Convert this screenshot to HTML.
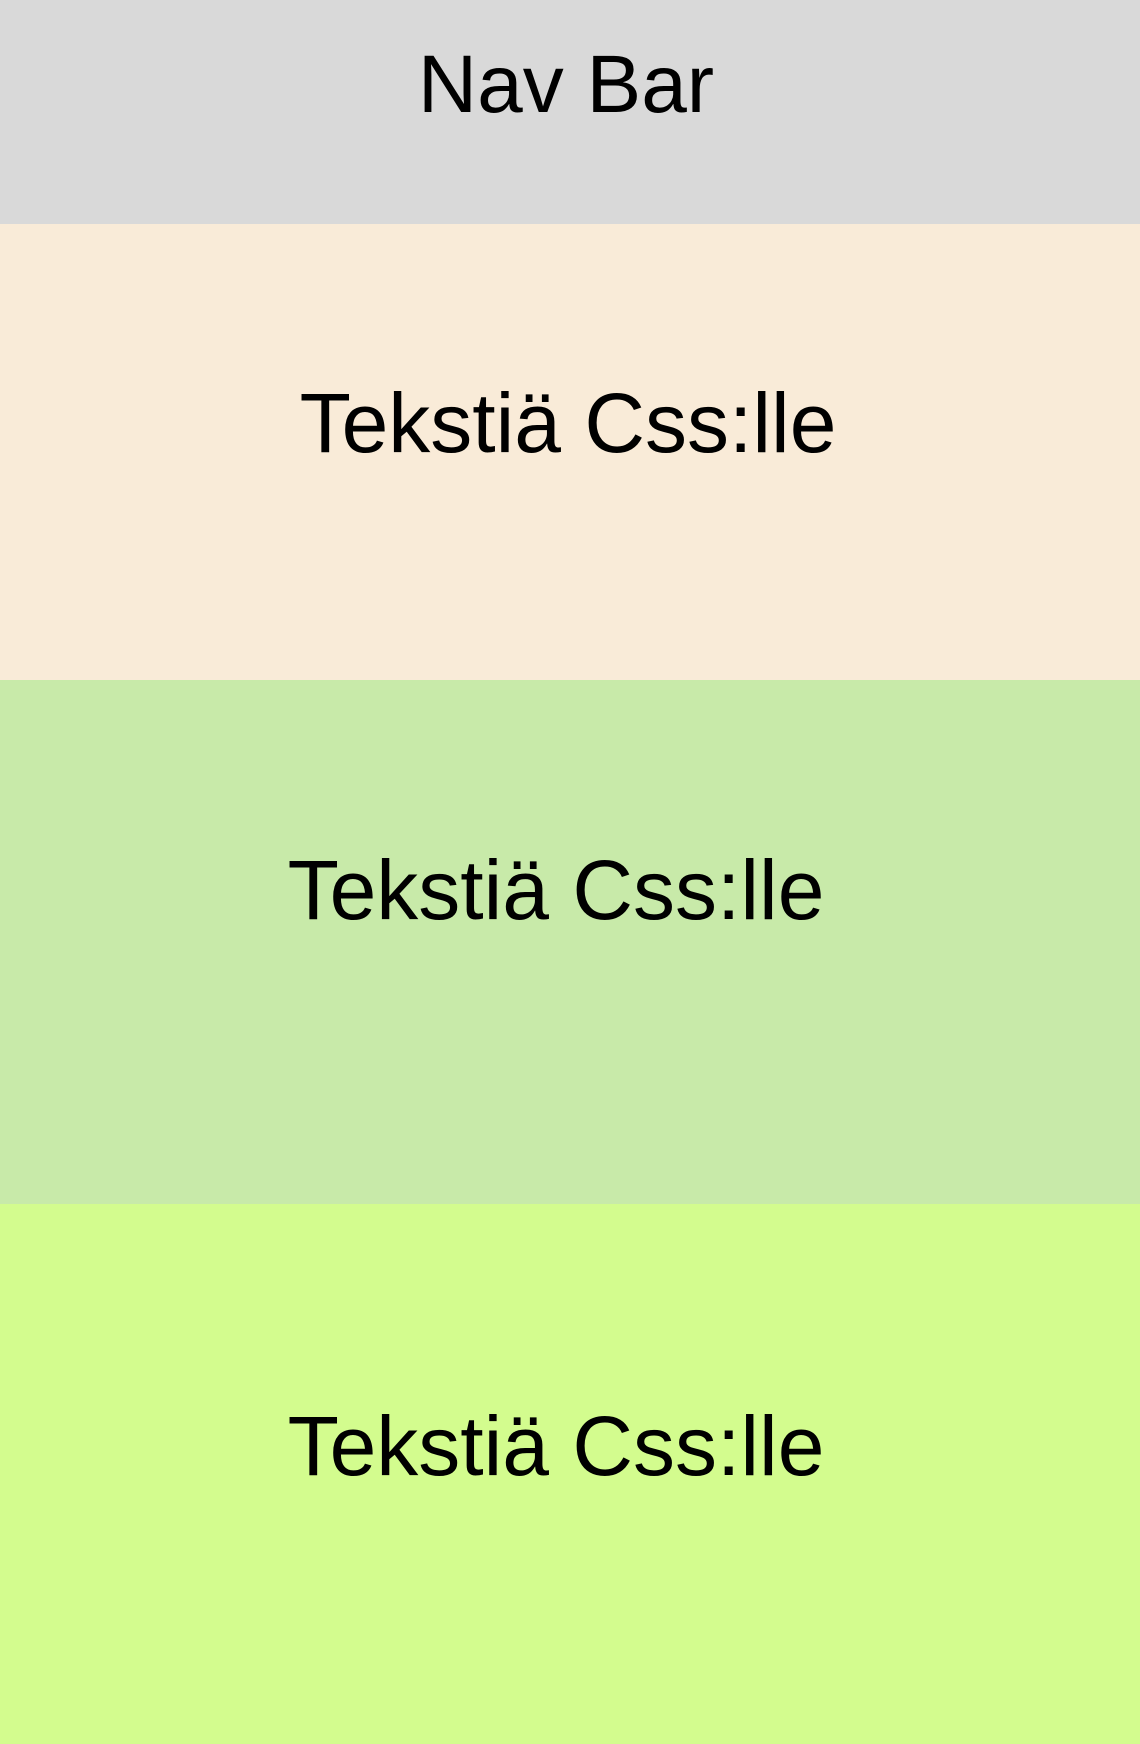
<!DOCTYPE html>
<html>
<head>
<meta charset="utf-8">
<style>
  html, body { margin:0; padding:0; }
  body { width:1140px; height:1744px; position:relative; overflow:hidden; font-family:"Liberation Sans", sans-serif; color:#000; }
  .sec { position:absolute; left:0; width:1140px; }
  .t { position:absolute; left:0; width:1140px; text-align:center; font-size:84px; line-height:84px; white-space:nowrap; }
</style>
</head>
<body>
  <div class="sec" style="top:0;height:224px;background:#d9d9d9;"></div>
  <div class="sec" style="top:224px;height:456px;background:#f9ebd8;"></div>
  <div class="sec" style="top:680px;height:524px;background:#c8eaa9;"></div>
  <div class="sec" style="top:1204px;height:540px;background:#d3fc8e;"></div>

  <div class="t" style="top:43px;left:-4px;font-size:82px;">Nav Bar</div>
  <div class="t" style="top:381px;left:-2px;">Tekstiä Css:lle</div>
  <div class="t" style="top:848px;left:-14px;">Tekstiä Css:lle</div>
  <div class="t" style="top:1404px;left:-14px;">Tekstiä Css:lle</div>
</body>
</html>
